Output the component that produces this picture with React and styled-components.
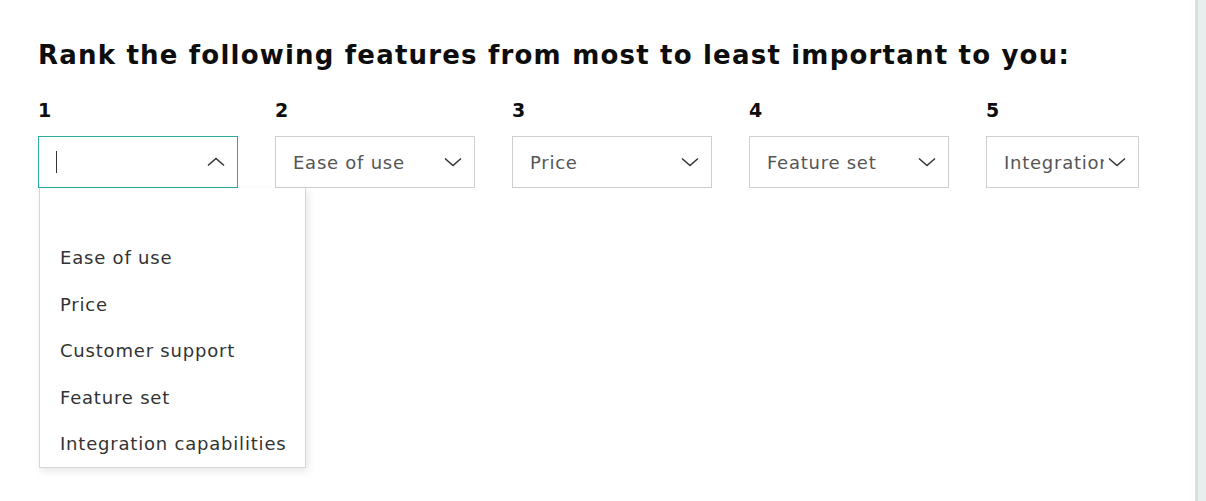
import React from 'react';
import styled, { createGlobalStyle } from 'styled-components';

const GlobalStyle = createGlobalStyle`
  html, body {
    margin: 0;
    padding: 0;
    background: #ffffff;
  }
  body {
    font-family: "DejaVu Sans", "Liberation Sans", sans-serif;
    color: #111;
  }
`;

const Page = styled.div`
  display: flex;
  height: 501px;
  overflow: hidden;
`;

const Main = styled.main`
  flex: 1;
  padding: 39px 0 0 38px;
`;

const SidePanel = styled.aside`
  width: 8px;
  background: #e7eeed;
  border-left: 3px solid #d8e1df;
`;

const Title = styled.h2`
  margin: 0;
  font-size: 26px;
  line-height: 32px;
  font-weight: 700;
  letter-spacing: 1.2px;
  color: #0d0d0d;
`;

const Row = styled.div`
  display: flex;
  gap: 37px;
  margin-top: 27px;
`;

const Field = styled.div`
  position: relative;
  display: flex;
  flex-direction: column;
  width: ${(p) => p.$width}px;
`;

const Label = styled.div`
  font-size: 19px;
  line-height: 24px;
  font-weight: 700;
  color: #0d0d0d;
  margin-bottom: 14px;
`;

const SelectBox = styled.div`
  box-sizing: border-box;
  height: 52px;
  display: flex;
  align-items: center;
  gap: 4px;
  padding: 0 12px 0 17px;
  border: ${(p) => (p.$open ? '1.5px solid #2aab9c' : '1px solid #cfcfcf')};
  background: #fff;
`;

const Value = styled.span`
  flex: 1;
  min-width: 0;
  overflow: hidden;
  white-space: nowrap;
  font-size: 18px;
  letter-spacing: 0.75px;
  color: #555;
`;

const Caret = styled.span`
  display: block;
  width: 1px;
  height: 22px;
  background: #333;
`;

const Chevron = styled.svg`
  flex: none;
  width: 18px;
  height: 10px;
  ${(p) => (p.$up ? 'transform: rotate(180deg);' : '')}
`;

const Menu = styled.ul`
  position: absolute;
  top: 100%;
  left: 1px;
  width: 267px;
  box-sizing: border-box;
  margin: 0;
  padding: 0;
  list-style: none;
  background: #fff;
  border: 1px solid #d6d6d6;
  border-top: none;
  box-shadow: 2px 3px 8px rgba(0, 0, 0, 0.1);
  z-index: 2;
`;

const Option = styled.li`
  height: 46.5px;
  display: flex;
  align-items: center;
  padding: 0 20px;
  font-size: 18px;
  letter-spacing: 0.8px;
  color: #333;
  white-space: nowrap;
`;

const ChevronIcon = ({ up }) => (
  <Chevron $up={up} viewBox="0 0 18 10">
    <path d="M1 1.5 L9 8.5 L17 1.5" fill="none" stroke="#333" strokeWidth="1.5" />
  </Chevron>
);

const options = ['Ease of use', 'Price', 'Customer support', 'Feature set', 'Integration capabilities'];

const ranks = [
  { rank: 1, value: '', width: 200, open: true },
  { rank: 2, value: 'Ease of use', width: 200 },
  { rank: 3, value: 'Price', width: 200 },
  { rank: 4, value: 'Feature set', width: 200 },
  { rank: 5, value: 'Integration capabilities', width: 153 },
];

export default function App() {
  return (
    <>
      <GlobalStyle />
      <Page>
        <Main>
          <Title>Rank the following features from most to least important to you:</Title>
          <Row>
            {ranks.map((r) => (
              <Field key={r.rank} $width={r.width}>
                <Label>{r.rank}</Label>
                <SelectBox $open={r.open}>
                  <Value>{r.open ? <Caret /> : r.value}</Value>
                  <ChevronIcon up={r.open} />
                </SelectBox>
                {r.open && (
                  <Menu>
                    <Option />
                    {options.map((o) => (
                      <Option key={o}>{o}</Option>
                    ))}
                  </Menu>
                )}
              </Field>
            ))}
          </Row>
        </Main>
        <SidePanel />
      </Page>
    </>
  );
}
